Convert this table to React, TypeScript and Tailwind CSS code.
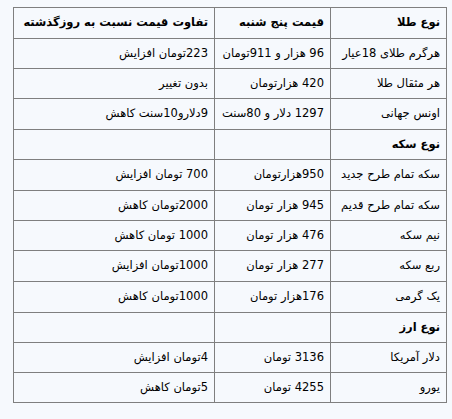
const rows: { cells: string[]; bold?: boolean; h: string }[] = [
  { cells: ['نوع طلا', 'قیمت پنج شنبه', 'تفاوت قیمت نسبت به روزگذشته'], bold: true, h: 'h-[31px]' },
  { cells: ['هرگرم طلای 18عیار', '96 هزار و 911تومان', '223تومان افزایش'], h: 'h-[30px]' },
  { cells: ['هر مثقال طلا', '420 هزارتومان', 'بدون تغییر'], h: 'h-[30px]' },
  { cells: ['اونس جهانی', '1297 دلار و 80سنت', '9دلارو10سنت کاهش'], h: 'h-[31px]' },
  { cells: ['نوع سکه', '', ''], bold: true, h: 'h-[30px]' },
  { cells: ['سکه تمام طرح جدید', '950هزارتومان', '700 تومان افزایش'], h: 'h-[31px]' },
  { cells: ['سکه تمام طرح قدیم', '945 هزار تومان', '2000تومان کاهش'], h: 'h-[30px]' },
  { cells: ['نیم سکه', '476 هزار تومان', '1000 تومان کاهش'], h: 'h-[30px]' },
  { cells: ['ربع سکه', '277 هزار تومان', '1000تومان افزایش'], h: 'h-[31px]' },
  { cells: ['یک گرمی', '176هزار تومان', '1000تومان کاهش'], h: 'h-[31px]' },
  { cells: ['نوع ارز', '', ''], bold: true, h: 'h-[30px]' },
  { cells: ['دلار آمریکا', '3136 تومان', '4تومان افزایش'], h: 'h-[30px]' },
  { cells: ['یورو', '4255 تومان', '5تومان کاهش'], h: 'h-[30px]' },
];

export default function App() {
  return (
    <div className="w-[452px] h-[419px] bg-[#f6f9fd] pt-[7px] pl-[13px]">
      <table
        dir="rtl"
        className="w-[433px] table-fixed border-collapse text-[11.5px] text-black"
        style={{ fontFamily: '"DejaVu Sans", Tahoma, sans-serif' }}
      >
        <colgroup>
          <col className="w-[116px]" />
          <col className="w-[116px]" />
          <col className="w-[201px]" />
        </colgroup>
        <tbody>
          {rows.map((row, i) => (
            <tr key={i} className={row.h}>
              {row.cells.map((c, j) => (
                <td
                  key={j}
                  className={`border border-[#7f7f7f] px-[6px] py-0 text-right align-middle whitespace-nowrap overflow-visible ${
                    row.bold ? 'font-bold' : ''
                  }`}
                >
                  {c}
                </td>
              ))}
            </tr>
          ))}
        </tbody>
      </table>
    </div>
  );
}
